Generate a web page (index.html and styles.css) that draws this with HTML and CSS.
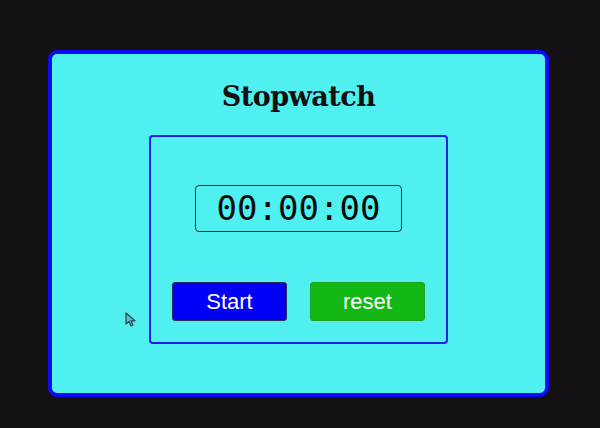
FILE: index.html
```html
<!DOCTYPE html>
<html>
<head>
<meta charset="utf-8">
<link rel="stylesheet" href="styles.css">
</head>
<body>
<div class="card">
  <h1 class="title">Stopwatch</h1>
  <div class="box">
    <div class="display">00:00:00</div>
    <div class="buttons">
      <button class="btn start">Start</button>
      <button class="btn reset">reset</button>
    </div>
  </div>
  <svg class="cursor" width="12" height="16" viewBox="0 0 12 16">
    <path d="M1 1 L1 12 L4 9.5 L6 14 L8 13 L6 8.8 L10 8.8 Z" fill="#49c6d2" stroke="#3a3f48" stroke-width="1.2" stroke-linejoin="round"/>
  </svg>
</div>
</body>
</html>
```

FILE: styles.css
```css
html, body {
  margin: 0;
  padding: 0;
}
body {
  background: #131113;
  width: 600px;
  height: 428px;
  padding: 50px 0 0 48px;
  box-sizing: border-box;
  font-family: "Liberation Sans", Arial, sans-serif;
}
.card {
  position: relative;
  width: 501px;
  height: 347px;
  box-sizing: border-box;
  background: #50f0f0;
  border: 4px solid #0a0af5;
  border-radius: 9px;
  display: flex;
  flex-direction: column;
  align-items: center;
}
.title {
  margin: 26px 0 0 0;
  font-family: "DejaVu Serif", "Liberation Serif", serif;
  font-weight: bold;
  font-size: 27px;
  line-height: 34px;
  color: #111;
  letter-spacing: -0.5px;
}
.box {
  margin-top: 21px;
  width: 299px;
  height: 209px;
  box-sizing: border-box;
  border: 2px solid #1f1fe6;
  border-radius: 4px;
  display: flex;
  flex-direction: column;
  align-items: center;
}
.display {
  margin-top: 48px;
  width: 207px;
  height: 47px;
  box-sizing: border-box;
  border: 1.5px solid #2a2a2a;
  border-radius: 4px;
  font-family: "DejaVu Sans Mono", monospace;
  font-size: 34px;
  line-height: 44px;
  text-align: center;
  color: #0b0b0b;
}
.buttons {
  margin-top: 50px;
  display: flex;
  gap: 23px;
}
.btn {
  width: 115px;
  height: 39px;
  box-sizing: border-box;
  border-radius: 3px;
  color: #fff;
  font-family: "Liberation Sans", Arial, sans-serif;
  font-size: 22px;
  padding: 0;
  line-height: 36px;
}
.start {
  background: #0000f5;
  border: 1px solid #2b2b55;
}
.reset {
  background: #14b814;
  border: 1px solid #22a022;
}
.cursor {
  position: absolute;
  left: 73px;
  top: 258px;
}
```
